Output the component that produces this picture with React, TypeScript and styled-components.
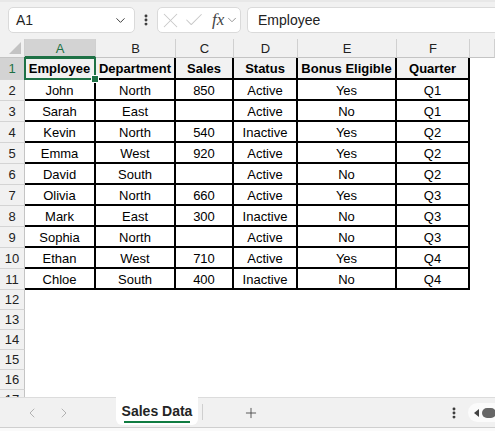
import { Fragment } from "react";
import styled, { createGlobalStyle } from "styled-components";
import {
  Check,
  ChevronDown,
  ChevronLeft,
  ChevronRight,
  EllipsisVertical,
  Plus,
  X,
} from "lucide-react";

const GlobalStyle = createGlobalStyle`
  html, body { margin: 0; padding: 0; }
  body {
    font-family: "Liberation Sans", Arial, sans-serif;
    background: #ffffff;
  }
  * { box-sizing: border-box; }
  svg { flex-shrink: 0; }
`;

const columns = [
  { key: "A", width: 71 },
  { key: "B", width: 80 },
  { key: "C", width: 58 },
  { key: "D", width: 64 },
  { key: "E", width: 99 },
  { key: "F", width: 73 },
];

const headers = ["Employee", "Department", "Sales", "Status", "Bonus Eligible", "Quarter"];

const rows = [
  ["John", "North", "850", "Active", "Yes", "Q1"],
  ["Sarah", "East", "", "Active", "No", "Q1"],
  ["Kevin", "North", "540", "Inactive", "Yes", "Q2"],
  ["Emma", "West", "920", "Active", "Yes", "Q2"],
  ["David", "South", "", "Active", "No", "Q2"],
  ["Olivia", "North", "660", "Active", "Yes", "Q3"],
  ["Mark", "East", "300", "Inactive", "No", "Q3"],
  ["Sophia", "North", "", "Active", "No", "Q3"],
  ["Ethan", "West", "710", "Active", "Yes", "Q4"],
  ["Chloe", "South", "400", "Inactive", "No", "Q4"],
];

// last one is only half visible, like in the real sheet
const emptyRows = [12, 13, 14, 15, 16, 17];

const Window = styled.div`
  width: 495px;
  height: 431px;
  display: flex;
  flex-direction: column;
  overflow: hidden;
  background: #ffffff;
`;

const Toolbar = styled.div`
  height: 39px;
  flex-shrink: 0;
  display: flex;
  align-items: center;
  gap: 6px;
  padding: 0 0 1px 8px;
  background: #f1f1f1;
  border-top: 2px solid #e8e8e8;
`;

const Field = styled.div<{ $width?: number }>`
  height: 26px;
  width: ${(p) => (p.$width ? `${p.$width}px` : "auto")};
  flex: ${(p) => (p.$width ? "0 0 auto" : "1 0 auto")};
  display: flex;
  align-items: center;
  background: #ffffff;
  border: 1px solid #dadada;
  border-radius: 5px;
  font-size: 14px;
  color: #222;
`;

const NameBox = styled(Field)`
  justify-content: space-between;
  padding: 0 6px 0 7px;
  color: #1f1f1f;
`;

const FormulaBox = styled(Field)`
  padding-left: 10px;
  border-radius: 5px 0 0 5px;
  border-right: none;
  margin-right: -4px;
`;

const Buttons = styled(Field)`
  gap: 0;
  padding: 0;
  color: #c8c8c8;
  overflow: hidden;
`;

const Fx = styled.span`
  font-family: "Liberation Serif", "Times New Roman", serif;
  font-style: italic;
  font-size: 17px;
  color: #444;
  margin-left: 7px;
  margin-right: 1px;
`;

const Dots = styled.div`
  width: 10px;
  display: flex;
  justify-content: center;
  color: #333;
`;

const Sheet = styled.div`
  flex: 1;
  overflow: hidden;
  display: grid;
  grid-template-columns: 25px ${columns.map((c) => `${c.width}px`).join(" ")} 1fr;
  grid-template-rows: 19px 22px repeat(10, 21px) repeat(6, 20px);
  font-size: 13px;
  color: #000;
`;

const Corner = styled.div`
  position: relative;
  background: #f1f1f1;
  border-right: 1px solid #cfcfcf;
  border-bottom: 1px solid #c4c4c4;
  &::after {
    content: "";
    position: absolute;
    right: 3px;
    bottom: 3px;
    width: 0;
    height: 0;
    border-left: 12px solid transparent;
    border-bottom: 12px solid #c3c3c3;
  }
`;

const ColHeader = styled.div<{ $active?: boolean }>`
  display: flex;
  align-items: center;
  justify-content: center;
  background: ${(p) => (p.$active ? "#d3d3d3" : "#f1f1f1")};
  color: ${(p) => (p.$active ? "#1e7145" : "#222")};
  border-right: 1px solid #d0d0d0;
  border-bottom: ${(p) => (p.$active ? "2px solid #1e7145" : "1px solid #c4c4c4")};
  padding-top: ${(p) => (p.$active ? "1px" : "0")};
`;

const RowHeader = styled.div<{ $active?: boolean }>`
  display: flex;
  align-items: center;
  justify-content: center;
  background: ${(p) => (p.$active ? "#d3d3d3" : "#f1f1f1")};
  color: ${(p) => (p.$active ? "#1e7145" : "#222")};
  border-right: 1px solid #c4c4c4;
  border-bottom: 1px solid #d4d4d4;
`;

const Cell = styled.div<{ $head?: boolean; $selected?: boolean }>`
  position: relative;
  display: flex;
  align-items: center;
  justify-content: center;
  white-space: nowrap;
  background: ${(p) => (p.$head ? "#f2f2f2" : "#ffffff")};
  font-weight: ${(p) => (p.$head ? 700 : 400)};
  border-right: 2px solid #000;
  border-bottom: 2px solid #000;
  padding-top: 1px;

  ${(p) =>
    p.$selected &&
    `
    &::after {
      content: "";
      position: absolute;
      inset: -1px -2px -2px -1px;
      border: 2px solid #1e7145;
      pointer-events: none;
    }
    &::before {
      content: "";
      position: absolute;
      right: -5px;
      bottom: -5px;
      width: 6px;
      height: 6px;
      background: #1e7145;
      border: 1px solid #ffffff;
      z-index: 1;
    }
  `}
`;

const Blank = styled.div<{ $span?: boolean }>`
  background: #ffffff;
  grid-column: ${(p) => (p.$span ? "2 / -1" : "auto")};
`;

const TabBar = styled.div`
  height: 30px;
  flex-shrink: 0;
  display: flex;
  align-items: stretch;
  background: #f1f1f1;
  border-top: 1px solid #dcdcdc;
`;

const NavArrows = styled.div`
  width: 116px;
  display: flex;
  align-items: center;
  gap: 16px;
  padding-left: 24px;
  color: #a8a8a8;
`;

const Tab = styled.div`
  width: 82px;
  margin-top: -1px;
  margin-bottom: 2px;
  display: flex;
  flex-direction: column;
  align-items: center;
  justify-content: center;
  gap: 2px;
  background: #ffffff;
  border-radius: 0 0 6px 6px;
  font-size: 14px;
  font-weight: 600;
  color: #242424;
  padding-top: 3px;
`;

const Underline = styled.div`
  width: 66px;
  height: 2px;
  background: #107c41;
`;

const Divider = styled.div`
  width: 1px;
  margin: 6px 0 7px 4px;
  background: #cfcfcf;
`;

const AddSheet = styled.div`
  width: 96px;
  display: flex;
  align-items: center;
  justify-content: center;
  color: #444;
`;

const Spacer = styled.div`
  flex: 1;
`;

const BarDots = styled.div`
  width: 16px;
  display: flex;
  align-items: center;
  justify-content: center;
  color: #333;
`;

const Scroller = styled.div`
  width: 30px;
  margin: 5px -3px 5px 6px;
  display: flex;
  align-items: center;
  gap: 3px;
  padding-left: 6px;
  background: #fbfbfb;
  border-radius: 10px 0 0 10px;
`;

const Tri = styled.div`
  width: 0;
  height: 0;
  border-top: 4px solid transparent;
  border-bottom: 4px solid transparent;
  border-right: 5px solid #444;
`;

const Thumb = styled.div`
  width: 14px;
  height: 10px;
  background: #666;
  border-radius: 5px;
`;

const Footer = styled.div`
  height: 4px;
  flex-shrink: 0;
  background: #fafafa;
  border-top: 1px solid #cfcfcf;
`;

export default function App() {
  return (
    <>
      <GlobalStyle />
      <Window>
        <Toolbar>
          <NameBox $width={127}>
            <span>A1</span>
            <ChevronDown size={15} strokeWidth={1.5} color="#333" />
          </NameBox>
          <Dots>
            <EllipsisVertical size={14} strokeWidth={3} />
          </Dots>
          <Buttons $width={84}>
            <X size={25} strokeWidth={1} />
            <Check size={22} strokeWidth={1.1} />
            <Fx>fx</Fx>
            <ChevronDown size={14} strokeWidth={1.5} color="#888" />
          </Buttons>
          <FormulaBox>Employee</FormulaBox>
        </Toolbar>

        <Sheet>
          <Corner />
          {columns.map((c) => (
            <ColHeader key={c.key} $active={c.key === "A"}>
              {c.key}
            </ColHeader>
          ))}
          <ColHeader />

          <RowHeader $active>1</RowHeader>
          {headers.map((h, i) => (
            <Cell key={h} $head $selected={i === 0}>
              {h}
            </Cell>
          ))}
          <Blank />

          {rows.map((r, ri) => (
            <Fragment key={ri}>
              <RowHeader>{ri + 2}</RowHeader>
              {r.map((v, ci) => (
                <Cell key={ci}>{v}</Cell>
              ))}
              <Blank />
            </Fragment>
          ))}

          {emptyRows.map((n) => (
            <Fragment key={n}>
              <RowHeader>{n}</RowHeader>
              <Blank $span />
            </Fragment>
          ))}
        </Sheet>

        <TabBar>
          <NavArrows>
            <ChevronLeft size={16} strokeWidth={1.3} />
            <ChevronRight size={16} strokeWidth={1.3} />
          </NavArrows>
          <Tab>
            <span>Sales Data</span>
            <Underline />
          </Tab>
          <Divider />
          <AddSheet>
            <Plus size={16} strokeWidth={1.3} />
          </AddSheet>
          <Spacer />
          <BarDots>
            <EllipsisVertical size={14} strokeWidth={3} />
          </BarDots>
          <Scroller>
            <Tri />
            <Thumb />
          </Scroller>
        </TabBar>
        <Footer />
      </Window>
    </>
  );
}
